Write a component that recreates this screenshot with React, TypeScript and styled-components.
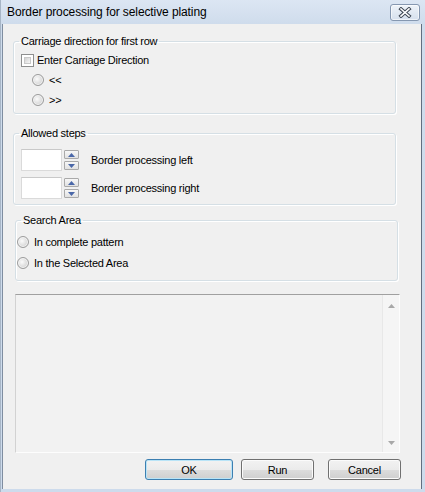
import styled, { createGlobalStyle } from "styled-components";

const GlobalStyle = createGlobalStyle`
  html, body {
    margin: 0;
    padding: 0;
    background: #cddbec;
  }
  body {
    font-family: "Liberation Sans", Arial, sans-serif;
  }
  * {
    box-sizing: border-box;
  }
`;

const Window = styled.div`
  width: 425px;
  height: 492px;
  display: flex;
  flex-direction: column;
  background: linear-gradient(#dce6f3 0px, #cfdcec 24px, #cddbec 100%);
  border-left: 1px solid #a7b5c6;
`;

const TitleBar = styled.div`
  height: 24px;
  flex: none;
  display: flex;
  align-items: center;
  justify-content: space-between;
  padding: 0 5px 0 6px;
`;

const Title = styled.span`
  font-size: 12px;
  color: #000;
  letter-spacing: -0.1px;
`;

const CloseButton = styled.button`
  width: 30px;
  height: 17px;
  padding: 0;
  display: flex;
  align-items: center;
  justify-content: center;
  border: 1px solid #8597b0;
  border-radius: 3px;
  background: linear-gradient(#eef3f9, #d6e0ed);
  box-shadow: inset 0 0 0 1px rgba(255, 255, 255, 0.6);
`;

const Client = styled.div`
  flex: 1;
  margin: 0 3px 3px 1px;
  border-left: 1px solid #7f8da0;
  border-right: 1px solid #626f80;
  background: #f0f0f0;
  display: flex;
  flex-direction: column;
  font-size: 11px;
  letter-spacing: -0.25px;
  color: #000;
`;

const Group = styled.fieldset<{ $left: number; $top: number; $height: number }>`
  margin: ${(p) => p.$top}px 0 0 ${(p) => p.$left}px;
  width: 383px;
  height: ${(p) => p.$height}px;
  padding: 0;
  min-width: 0;
  border: 1px solid #d5dfe5;
  border-radius: 3px;
  box-shadow: inset 1px 1px 0 #fff, 1px 1px 0 #fff;
`;

const Legend = styled.legend<{ $indent: number }>`
  margin-left: ${(p) => p.$indent}px;
  padding: 0 2px;
  font-size: 11px;
  line-height: 13px;
`;

const Rows = styled.div<{ $pad: number; $gap: number; $left: number }>`
  display: flex;
  flex-direction: column;
  gap: ${(p) => p.$gap}px;
  padding: ${(p) => p.$pad}px 0 0 ${(p) => p.$left}px;
`;

const Row = styled.label<{ $indent?: number; $gap: number }>`
  height: 16px;
  display: flex;
  align-items: center;
  gap: ${(p) => p.$gap}px;
  padding-left: ${(p) => p.$indent ?? 0}px;
  line-height: 13px;
`;

const CheckBox = styled.span`
  width: 13px;
  height: 13px;
  flex: none;
  display: flex;
  padding: 2px;
  border: 1px solid #8e8f8f;
  background: #fff;

  &::after {
    content: "";
    flex: 1;
    border: 1px solid #c9c9c9;
    background: linear-gradient(135deg, #d2d2d2, #f7f7f7);
  }
`;

const Radio = styled.span`
  width: 12px;
  height: 12px;
  flex: none;
  border-radius: 50%;
  border: 1px solid #9c9c9c;
  background: radial-gradient(
    circle at 40% 40%,
    #fbfbfb 0%,
    #e2e2e2 45%,
    #c9c9c9 100%
  );
  box-shadow: inset 0 0 0 1px #f4f4f4;
`;

const SpinRow = styled.div`
  height: 22px;
  display: flex;
  align-items: center;
`;

const Edit = styled.div`
  width: 41px;
  height: 22px;
  flex: none;
  background: #fff;
  border: 1px solid #dadada;
  border-top-color: #c9c9c9;
`;

const SpinButtons = styled.div`
  margin-left: 2px;
  width: 15px;
  height: 22px;
  display: flex;
  flex-direction: column;
  justify-content: center;
  gap: 2px;
`;

const SpinButton = styled.div`
  height: 9px;
  display: flex;
  align-items: center;
  justify-content: center;
  border: 1px solid #a9a9a9;
  border-radius: 1px;
  background: linear-gradient(#f7f7f7, #e1e1e1);
`;

const SpinLabel = styled.span`
  margin-left: 12px;
`;

const ListBox = styled.div`
  margin: 13px 0 0 12px;
  width: 385px;
  height: 159px;
  display: flex;
  justify-content: flex-end;
  background: #f2f2f2;
  border-top: 1px solid #a0a0a0;
  border-left: 1px solid #d2d2d2;
  border-right: 1px solid #fdfdfd;
  border-bottom: 1px solid #fdfdfd;
`;

const ScrollBar = styled.div`
  width: 17px;
  display: flex;
  flex-direction: column;
  justify-content: space-between;
  align-items: center;
  padding: 9px 0 7px;
  background: #f5f5f5;
  border-left: 1px solid #e8e8e8;
`;

const ButtonRow = styled.div`
  margin-top: 6px;
  display: flex;
  padding-left: 142px;
`;

const Button = styled.button<{ $width: number; $gap?: number; $default?: boolean }>`
  width: ${(p) => p.$width}px;
  height: 21px;
  margin-left: ${(p) => p.$gap ?? 0}px;
  padding: 0;
  font-family: "Liberation Sans", Arial, sans-serif;
  font-size: 11px;
  letter-spacing: -0.2px;
  color: #000;
  border: 1px solid ${(p) => (p.$default ? "#3c7fb1" : "#707070")};
  border-radius: 3px;
  background: linear-gradient(#f2f2f2 0%, #ebebeb 50%, #dddddd 51%, #cfcfcf 100%);
  box-shadow: inset 0 0 0 1px ${(p) => (p.$default ? "#b9e4f7" : "#fbfbfb")};
`;

const CloseIcon = () => (
  <svg width="14" height="11" viewBox="0 0 14 11">
    <path d="M3 2 L11 9 M11 2 L3 9" stroke="#3e4753" strokeWidth="3.6" strokeLinecap="square" />
    <path d="M3 2 L11 9 M11 2 L3 9" stroke="#ffffff" strokeWidth="1.6" strokeLinecap="square" />
  </svg>
);

const Arrow = ({ up, color }: { up: boolean; color: string }) => (
  <svg width="7" height="4" viewBox="0 0 7 4">
    <path d={up ? "M0 4 L3.5 0 L7 4 Z" : "M0 0 L3.5 4 L7 0 Z"} fill={color} />
  </svg>
);

const Spinner = ({ label }: { label: string }) => (
  <SpinRow>
    <Edit />
    <SpinButtons>
      <SpinButton>
        <Arrow up color="#4a67a8" />
      </SpinButton>
      <SpinButton>
        <Arrow up={false} color="#4a67a8" />
      </SpinButton>
    </SpinButtons>
    <SpinLabel>{label}</SpinLabel>
  </SpinRow>
);

export default function App() {
  return (
    <>
      <GlobalStyle />
      <Window>
        <TitleBar>
          <Title>Border processing for selective plating</Title>
          <CloseButton>
            <CloseIcon />
          </CloseButton>
        </TitleBar>
        <Client>
          <Group $left={10} $top={11} $height={79}>
            <Legend $indent={5}>Carriage direction for first row</Legend>
            <Rows $pad={4} $gap={4} $left={7}>
              <Row $gap={3}>
                <CheckBox />
                Enter Carriage Direction
              </Row>
              <Row $indent={11} $gap={5}>
                <Radio />
                &lt;&lt;
              </Row>
              <Row $indent={11} $gap={5}>
                <Radio />
                &gt;&gt;
              </Row>
            </Rows>
          </Group>

          <Group $left={10} $top={13} $height={78}>
            <Legend $indent={5}>Allowed steps</Legend>
            <Rows $pad={9} $gap={6} $left={7}>
              <Spinner label="Border processing left" />
              <Spinner label="Border processing right" />
            </Rows>
          </Group>

          <Group $left={12} $top={9} $height={67}>
            <Legend $indent={5}>Search Area</Legend>
            <Rows $pad={7} $gap={5} $left={1}>
              <Row $gap={5}>
                <Radio />
                In complete pattern
              </Row>
              <Row $gap={5}>
                <Radio />
                In the Selected Area
              </Row>
            </Rows>
          </Group>

          <ListBox>
            <ScrollBar>
              <Arrow up color="#a8a8a8" />
              <Arrow up={false} color="#a8a8a8" />
            </ScrollBar>
          </ListBox>

          <ButtonRow>
            <Button $width={88} $default>
              OK
            </Button>
            <Button $width={73} $gap={8}>
              Run
            </Button>
            <Button $width={73} $gap={14}>
              Cancel
            </Button>
          </ButtonRow>
        </Client>
      </Window>
    </>
  );
}
